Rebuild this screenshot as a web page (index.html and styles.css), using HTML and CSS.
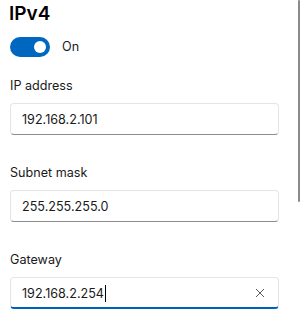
FILE: index.html
```html
<!DOCTYPE html>
<html lang="en">
<head>
    <meta charset="UTF-8">
    <meta name="viewport" content="width=device-width, initial-scale=1.0">
    <title>IPv4 settings</title>
    <link rel="stylesheet" href="styles.css">
</head>
<body>
    <div class="panel">
        <h2 class="title">IPv4</h2>

        <div class="switch-row">
            <div class="switch"><span class="knob"></span></div>
            <span class="switch-label">On</span>
        </div>

        <div class="field">
            <div class="label">IP address</div>
            <div class="textbox">192.168.2.101</div>
        </div>
        <div class="field">
            <div class="label">Subnet mask</div>
            <div class="textbox">255.255.255.0</div>
        </div>
        <div class="field">
            <div class="label">Gateway</div>
            <div class="textbox focused">
                <span class="value">192.168.2.254</span><span class="caret"></span>
                <svg class="clear" width="10" height="10" viewBox="0 0 10 10">
                    <path d="M1 1 L9 9 M9 1 L1 9" stroke="#5c5c5c" stroke-width="1" fill="none"/>
                </svg>
            </div>
        </div>

        <div class="scrollbar"></div>
    </div>
</body>
</html>
```

FILE: styles.css
```css
body {
    margin: 0;
    background: #fff;
    color: #1a1a1a;
    font-family: Inter, "Noto Sans", sans-serif;
    font-size: 12.6px;
}
.panel {
    position: relative; /* for the scrollbar */
    height: 335px;
    padding-left: 10px;
    overflow: hidden;
}
.title {
    margin: 0 0 0 -1px;
    font-size: 19px;
    font-weight: 600;
    line-height: 28px;
    color: #000;
}
.switch-row {
    display: flex;
    align-items: center;
    gap: 12px;
    margin-top: 9px;
}
.switch {
    width: 40px;
    height: 20px;
    border-radius: 10px;
    background: #0067c0;
    display: flex;
    align-items: center;
    justify-content: flex-end;
    padding-right: 4px;
    box-sizing: border-box;
}
.knob {
    width: 12px;
    height: 12px;
    border-radius: 50%;
    background: #fff;
}
.switch-label {
    line-height: 20px;
}
.field {
    margin-top: 19px;
}
.field + .field {
    margin-top: 28px;
}
.label {
    line-height: 20px;
    margin-bottom: 7px;
}
.textbox {
    width: 269px;
    height: 32px;
    box-sizing: border-box;
    display: flex;
    align-items: center;
    padding: 0 11px;
    border: 1px solid #e5e5e5;
    border-bottom-color: #8d8d8d;
    border-radius: 4px;
    background: #fff;
}
.textbox.focused {
    border-bottom: 2px solid #005fb8;
    padding-top: 1px;
}
.caret {
    width: 1px;
    height: 17px;
    margin-left: 1px;
    background: #000;
}
.clear {
    margin-left: auto;
    margin-right: 2px;
}
.scrollbar {
    position: absolute;
    top: 0;
    right: 0;
    width: 2px;
    height: 202px;
    border-radius: 1px;
    background: #8a8a8a;
}
```
